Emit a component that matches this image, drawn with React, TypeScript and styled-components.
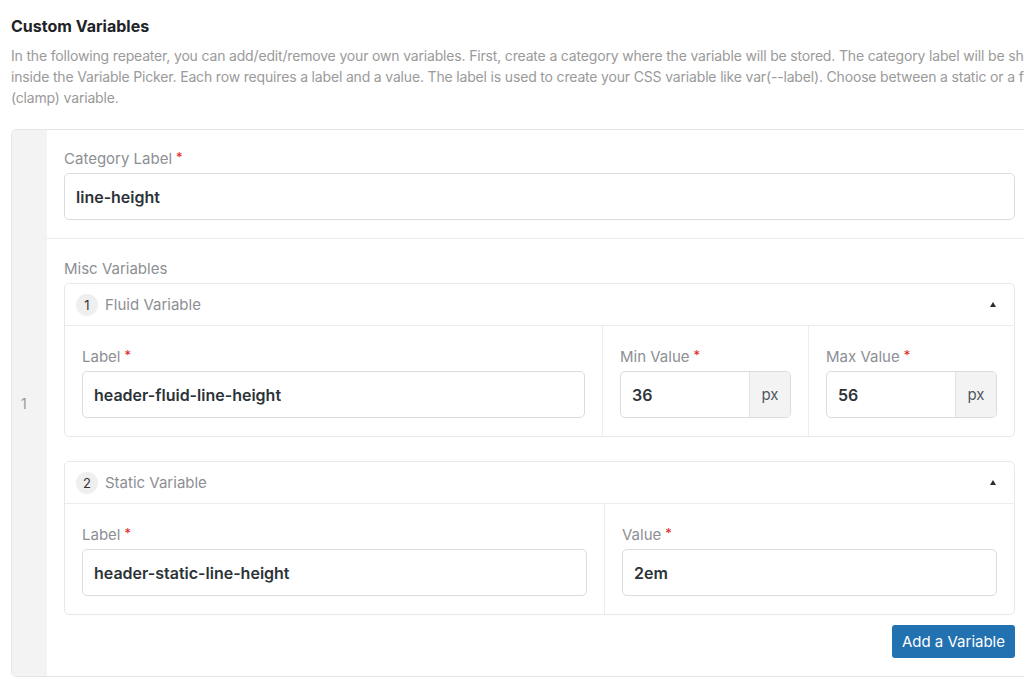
import styled, { createGlobalStyle } from 'styled-components';

const GlobalStyle = createGlobalStyle`
  html, body {
    margin: 0;
    padding: 0;
    background: #ffffff;
    overflow: hidden;
  }
  * {
    box-sizing: border-box;
  }
`;

const Page = styled.div`
  width: 1060px;
  padding: 16px 0 0 11px;
  font-family: Inter, "Noto Sans", "Liberation Sans", sans-serif;
`;

const Title = styled.h2`
  margin: 0 0 9px;
  font-size: 16px;
  line-height: 20px;
  font-weight: 700;
  color: #1d2327;
`;

const Description = styled.p`
  margin: 0 0 21px;
  font-size: 14px;
  line-height: 21px;
  letter-spacing: -0.17px;
  color: #9a9a9a;
  white-space: nowrap;
`;

const Repeater = styled.div`
  display: flex;
  width: 1022px;
  border: 1px solid #e6e6e6;
  border-radius: 5px;
  overflow: hidden;
`;

const RowIndex = styled.div`
  width: 35px;
  flex-shrink: 0;
  display: flex;
  align-items: center;
  padding-left: 9px;
  background: #f3f3f3;
  color: #9a9a9a;
  font-size: 14px;
`;

const RowBody = styled.div`
  flex: 1;
  display: flex;
  flex-direction: column;
`;

const Section = styled.div<{ divided?: boolean }>`
  padding: ${({ divided }) => (divided ? '18px 17px 18px' : '19px 17px 18px')};
  border-bottom: ${({ divided }) => (divided ? '1px solid #ebebeb' : 'none')};
`;

const FieldLabel = styled.div`
  height: 20px;
  font-size: 15px;
  line-height: 21px;
  color: #8c8f94;
  margin-bottom: 5px;
`;

const Required = styled.span`
  color: #e2231a;
  font-size: 13px;
  line-height: 0;
  margin-left: 4px;
  vertical-align: 2px;
`;

const InputBox = styled.div`
  display: flex;
  height: 47px;
  border: 1px solid #dcdcde;
  border-radius: 5px;
  overflow: hidden;
  background: #ffffff;
`;

const InputValue = styled.div`
  flex: 1;
  display: flex;
  align-items: center;
  padding: 0 11px;
  font-size: 16px;
  font-weight: 600;
  color: #2c3338;
`;

const Suffix = styled.div`
  width: 41px;
  display: flex;
  align-items: center;
  justify-content: center;
  background: #f3f3f3;
  border-left: 1px solid #e2e2e2;
  color: #50575e;
  font-size: 15px;
`;

const SubItem = styled.div`
  border: 1px solid #e8e8e8;
  border-radius: 5px;
  & + & {
    margin-top: 24px;
  }
`;

const SubHeader = styled.div`
  height: 42px;
  display: flex;
  align-items: center;
  padding: 0 18px 0 11px;
  border-bottom: 1px solid #ececec;
`;

const Badge = styled.span`
  width: 22px;
  height: 22px;
  border-radius: 50%;
  background: #efefef;
  display: flex;
  align-items: center;
  justify-content: center;
  font-size: 13px;
  color: #333333;
  margin-right: 7px;
`;

const SubTitle = styled.span`
  flex: 1;
  font-size: 15px;
  color: #8c8f94;
`;

const Caret = styled.span`
  width: 0;
  height: 0;
  border-left: 3.5px solid transparent;
  border-right: 3.5px solid transparent;
  border-bottom: 5px solid #2c2c2c;
`;

const Fields = styled.div`
  display: flex;
`;

const Cell = styled.div<{ width?: number }>`
  flex: ${({ width }) => (width ? `0 0 ${width}px` : '1')};
  padding: 20px 17px 18px;
  & + & {
    border-left: 1px solid #ececec;
  }
`;

const Footer = styled.div`
  display: flex;
  justify-content: flex-end;
  margin-top: 10px;
`;

const Button = styled.button`
  height: 33px;
  padding: 0 10px;
  border: none;
  border-radius: 3px;
  background: #2271b1;
  color: #ffffff;
  font-family: inherit;
  font-size: 15px;
`;

interface FieldProps {
  label: string;
  value: string;
  suffix?: string;
}

const Field = ({ label, value, suffix }: FieldProps) => (
  <>
    <FieldLabel>
      {label}
      <Required>*</Required>
    </FieldLabel>
    <InputBox>
      <InputValue>{value}</InputValue>
      {suffix && <Suffix>{suffix}</Suffix>}
    </InputBox>
  </>
);

const App = () => {
  return (
    <>
      <GlobalStyle />
      <Page>
        <Title>Custom Variables</Title>
        <Description>
          In the following repeater, you can add/edit/remove your own variables. First, create a category where the variable will be stored. The category label will be shown
          <br />
          inside the Variable Picker. Each row requires a label and a value. The label is used to create your CSS variable like var(--label). Choose between a static or a fluid
          <br />
          (clamp) variable.
        </Description>
        <Repeater>
          <RowIndex>1</RowIndex>
          <RowBody>
            <Section divided>
              <Field label="Category Label" value="line-height" />
            </Section>
            <Section>
              <FieldLabel>Misc Variables</FieldLabel>
              <SubItem>
                <SubHeader>
                  <Badge>1</Badge>
                  <SubTitle>Fluid Variable</SubTitle>
                  <Caret />
                </SubHeader>
                <Fields>
                  <Cell>
                    <Field label="Label" value="header-fluid-line-height" />
                  </Cell>
                  <Cell width={206}>
                    <Field label="Min Value" value="36" suffix="px" />
                  </Cell>
                  <Cell width={206}>
                    <Field label="Max Value" value="56" suffix="px" />
                  </Cell>
                </Fields>
              </SubItem>
              <SubItem>
                <SubHeader>
                  <Badge>2</Badge>
                  <SubTitle>Static Variable</SubTitle>
                  <Caret />
                </SubHeader>
                <Fields>
                  <Cell>
                    <Field label="Label" value="header-static-line-height" />
                  </Cell>
                  <Cell width={410}>
                    <Field label="Value" value="2em" />
                  </Cell>
                </Fields>
              </SubItem>
              <Footer>
                <Button>Add a Variable</Button>
              </Footer>
            </Section>
          </RowBody>
        </Repeater>
      </Page>
    </>
  );
};

export default App;
